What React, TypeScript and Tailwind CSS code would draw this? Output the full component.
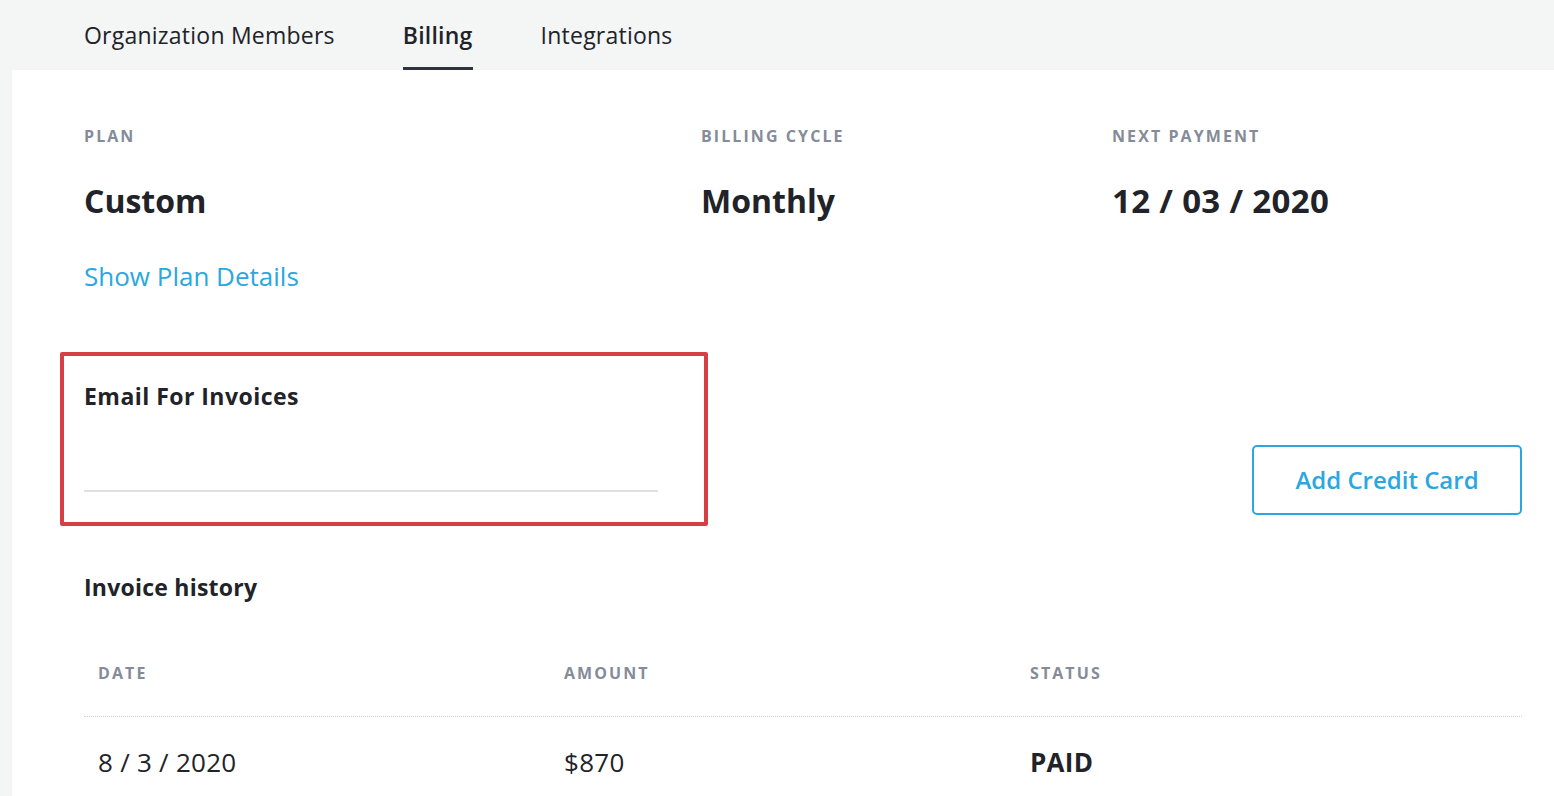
import React from 'react';

const tabs = ['Organization Members', 'Billing', 'Integrations'];

const App: React.FC = () => {
  return (
    <div className="min-h-screen bg-[#f4f5f5] text-[#212328] font-['Open_Sans',sans-serif] overflow-hidden">
      {/* tabs */}
      <div className="flex h-[70px] gap-[68px] pl-[84px]">
        {tabs.map((t) => (
          <div
            key={t}
            className={
              t === 'Billing'
                ? 'flex items-center h-full border-b-[3px] border-[#2d3440] pt-[3px] text-[23px] tracking-[0.01em] font-semibold'
                : 'flex items-center h-full text-[23px] tracking-[0.01em]'
            }
          >
            {t}
          </div>
        ))}
      </div>

      {/* panel */}
      <div className="ml-[12px] bg-white pl-[72px] pr-[32px] pt-[56px] pb-[40px]">
        <div className="grid grid-cols-[617px_411px_1fr]">
          <div>
            <div className="text-[16px] leading-[20px] font-bold tracking-[0.13em] text-[#858b98]">PLAN</div>
            <div className="mt-[35px] text-[32px] leading-[40px] font-bold">Custom</div>
            <button className="mt-[39px] text-[26px] leading-[32px] text-[#2ba7e0]">Show Plan Details</button>
          </div>
          <div>
            <div className="text-[16px] leading-[20px] font-bold tracking-[0.13em] text-[#858b98]">BILLING CYCLE</div>
            <div className="mt-[35px] text-[32px] leading-[40px] font-bold">Monthly</div>
          </div>
          <div>
            <div className="text-[16px] leading-[20px] font-bold tracking-[0.13em] text-[#858b98]">NEXT PAYMENT</div>
            <div className="mt-[35px] text-[33px] leading-[40px] font-bold tracking-[0.01em]">12 / 03 / 2020</div>
          </div>
        </div>

        <div className="mt-[60px] flex items-end justify-between">
          <div className="-ml-[24px] w-[648px] border-4 border-[#d64045] rounded-[2px] pl-[20px] pr-[46px] pt-[26px] pb-[30px]">
            <div className="text-[23px] leading-[28px] font-bold tracking-[0.02em]">Email For Invoices</div>
            <input className="mt-[52px] block w-full h-[30px] border-b-2 border-[#dfe0e4] outline-none text-[20px]" />
          </div>
          <button className="mb-[11px] w-[270px] h-[70px] rounded-[5px] border-2 border-[#2ba7e0] text-[24px] font-semibold text-[#2ba7e0]">
            Add Credit Card
          </button>
        </div>

        <div className="mt-[47px] text-[23px] leading-[28px] font-bold tracking-[0.01em]">Invoice history</div>

        <div className="mt-[62px]">
          <div className="grid grid-cols-[466px_466px_1fr] pl-[14px] pb-[33px] border-b border-dotted border-[#cfd1d4] text-[16px] leading-[20px] font-bold tracking-[0.13em] text-[#858b98]">
            <div>DATE</div>
            <div>AMOUNT</div>
            <div>STATUS</div>
          </div>
          <div className="grid grid-cols-[466px_466px_1fr] pl-[14px] pt-[29px] text-[26px] leading-[32px] tracking-[0.01em]">
            <div>8 / 3 / 2020</div>
            <div>$870</div>
            <div className="font-bold">PAID</div>
          </div>
        </div>
      </div>
    </div>
  );
};

export default App;
